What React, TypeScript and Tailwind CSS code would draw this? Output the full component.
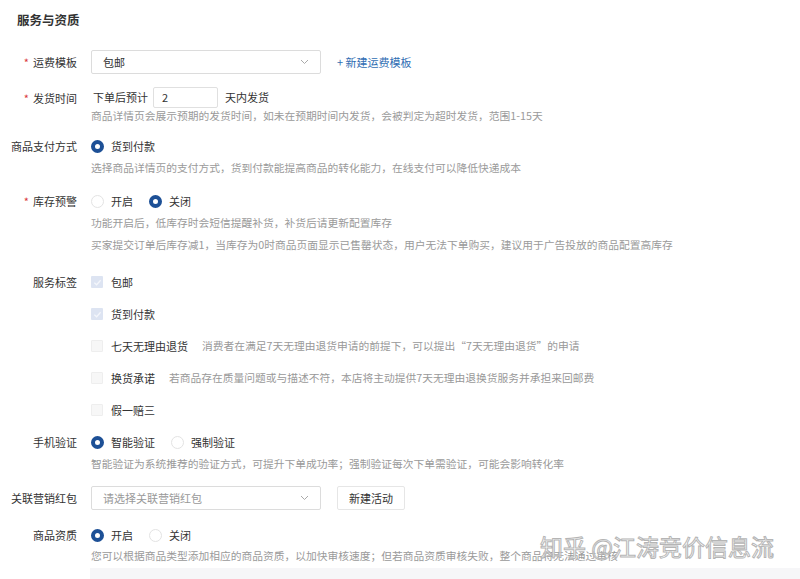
import React from "react";

const font = { fontFamily: '"Noto Sans CJK SC", "Noto Sans", sans-serif' };

function Label({ children, req }: { children: React.ReactNode; req?: boolean }) {
  return (
    <div className="w-[77px] shrink-0 text-right text-[11px] leading-[16px] text-[#333]">
      {req && <span className="mr-[4px] text-[#d9363e]">*</span>}
      {children}
    </div>
  );
}

function Radio({ checked, label }: { checked?: boolean; label: string }) {
  return (
    <div className="flex items-center gap-[7px]">
      {checked ? (
        <span className="box-border h-[13px] w-[13px] rounded-full border-[4px] border-[#1d5096] bg-white" />
      ) : (
        <span className="box-border h-[13px] w-[13px] rounded-full border border-[#e3e3e3] bg-white" />
      )}
      <span className="text-[11px] leading-[16px] text-[#333]">{label}</span>
    </div>
  );
}

function Check({ checked, label, desc }: { checked?: boolean; label: string; desc?: string }) {
  return (
    <div className="flex h-[16px] items-center">
      {checked ? (
        <span className="flex h-[12px] w-[12px] items-center justify-center rounded-[1px] bg-[#dde4f2]">
          <svg width="9" height="9" viewBox="0 0 10 10">
            <path d="M1.5 5.2 L4 7.5 L8.5 2.5" fill="none" stroke="#f4f6fb" strokeWidth="1.4" />
          </svg>
        </span>
      ) : (
        <span className="h-[12px] w-[12px] rounded-[1px] border border-[#eeeeee] bg-[#f7f7f7]" />
      )}
      <span className="ml-[8px] text-[11px] leading-[16px] text-[#333]">{label}</span>
      {desc && <span className="ml-[14px] text-[10.75px] leading-[16px] text-[#999]">{desc}</span>}
    </div>
  );
}

function Help({ children }: { children: React.ReactNode }) {
  return <div className="text-[10.75px] leading-[15px] text-[#9a9a9a]">{children}</div>;
}

function Chevron() {
  return (
    <svg width="9" height="6" viewBox="0 0 9 6">
      <path d="M1 1 L4.5 4.5 L8 1" fill="none" stroke="#aaa" strokeWidth="1" />
    </svg>
  );
}

function Select({ value, placeholder }: { value?: string; placeholder?: string }) {
  return (
    <div className="flex h-[24px] w-[230px] items-center justify-between rounded-[2px] border border-[#dcdcdc] bg-white pl-[11px] pr-[11px]">
      {value ? (
        <span className="text-[11px] text-[#333]">{value}</span>
      ) : (
        <span className="text-[11px] text-[#999]">{placeholder}</span>
      )}
      <Chevron />
    </div>
  );
}

export default function App() {
  return (
    <div className="relative h-[579px] w-[800px] overflow-hidden bg-white" style={font}>
      <div className="pl-[17px] pt-[12px] text-[12.5px] font-bold leading-[16px] text-[#333]">服务与资质</div>

      {/* 运费模板 */}
      <div className="mt-[22px] flex h-[24px] items-center gap-[14px]">
        <Label req>运费模板</Label>
        <Select value="包邮" />
        <span className="ml-[2px] text-[11px] text-[#2f6eb3]">+ 新建运费模板</span>
      </div>

      {/* 发货时间 */}
      <div className="mt-[13px] flex gap-[14px]">
        <div className="flex h-[21px] items-center">
          <Label req>发货时间</Label>
        </div>
        <div className="flex flex-col">
          <div className="flex h-[21px] items-center">
            <span className="ml-[2px] text-[11px] text-[#333]">下单后预计</span>
            <div className="ml-[5px] flex h-[21px] w-[65px] items-center rounded-[2px] border border-[#e0e0e0] pl-[8px] text-[11px] text-[#333]">
              2
            </div>
            <span className="ml-[7px] text-[11px] text-[#333]">天内发货</span>
          </div>
          <Help>商品详情页会展示预期的发货时间，如未在预期时间内发货，会被判定为超时发货，范围1-15天</Help>
        </div>
      </div>

      {/* 商品支付方式 */}
      <div className="mt-[15px] flex gap-[14px]">
        <Label>商品支付方式</Label>
        <div className="flex flex-col">
          <Radio checked label="货到付款" />
          <div className="mt-[6px]">
            <Help>选择商品详情页的支付方式，货到付款能提高商品的转化能力，在线支付可以降低快递成本</Help>
          </div>
        </div>
      </div>

      {/* 库存预警 */}
      <div className="mt-[18px] flex gap-[14px]">
        <Label req>库存预警</Label>
        <div className="flex flex-col">
          <div className="flex gap-[16px]">
            <Radio label="开启" />
            <Radio checked label="关闭" />
          </div>
          <div className="mt-[6px]">
            <Help>功能开启后，低库存时会短信提醒补货，补货后请更新配置库存</Help>
          </div>
          <div className="mt-[7px]">
            <Help>买家提交订单后库存减1，当库存为0时商品页面显示已售罄状态，用户无法下单购买，建议用于广告投放的商品配置高库存</Help>
          </div>
        </div>
      </div>

      {/* 服务标签 */}
      <div className="mt-[22px] flex gap-[14px]">
        <Label>服务标签</Label>
        <div className="flex flex-col gap-[16px]">
          <Check checked label="包邮" />
          <Check checked label="货到付款" />
          <Check label="七天无理由退货" desc="消费者在满足7天无理由退货申请的前提下，可以提出“7天无理由退货”的申请" />
          <Check label="换货承诺" desc="若商品存在质量问题或与描述不符，本店将主动提供7天无理由退换货服务并承担来回邮费" />
          <Check label="假一赔三" />
        </div>
      </div>

      {/* 手机验证 */}
      <div className="mt-[16px] flex gap-[14px]">
        <Label>手机验证</Label>
        <div className="flex flex-col">
          <div className="flex gap-[16px]">
            <Radio checked label="智能验证" />
            <Radio label="强制验证" />
          </div>
          <div className="mt-[6px]">
            <Help>智能验证为系统推荐的验证方式，可提升下单成功率；强制验证每次下单需验证，可能会影响转化率</Help>
          </div>
        </div>
      </div>

      {/* 关联营销红包 */}
      <div className="mt-[15px] flex h-[24px] items-center gap-[14px]">
        <Label>关联营销红包</Label>
        <Select placeholder="请选择关联营销红包" />
        <div className="ml-[2px] flex h-[24px] w-[68px] items-center justify-center rounded-[2px] border border-[#e6e6e6] text-[11px] text-[#333]">
          新建活动
        </div>
      </div>

      {/* 商品资质 */}
      <div className="mt-[17px] flex gap-[14px]">
        <Label>商品资质</Label>
        <div className="flex flex-col">
          <div className="flex gap-[16px]">
            <Radio checked label="开启" />
            <Radio label="关闭" />
          </div>
          <div className="mt-[5px]">
            <Help>您可以根据商品类型添加相应的商品资质，以加快审核速度；但若商品资质审核失败，整个商品将无法通过审核</Help>
          </div>
        </div>
      </div>

      <div className="ml-[90px] mt-[5px] h-[40px] bg-[#f6f6f8]" />

      {/* 水印 */}
      <div className="absolute left-[540px] top-[531px] whitespace-nowrap text-[23px] leading-[30px] text-[rgba(255,255,255,0.5)] [-webkit-text-stroke:1px_#b5b5b5]">
        知乎 @江涛竞价信息流
      </div>
    </div>
  );
}
